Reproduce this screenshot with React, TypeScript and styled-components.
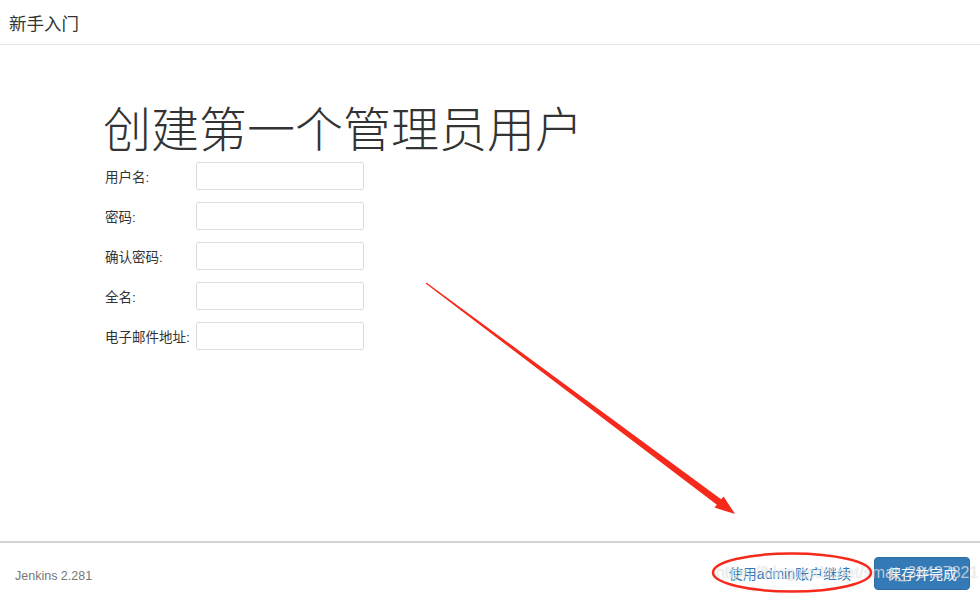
import styled, { createGlobalStyle } from "styled-components";

const GlobalStyle = createGlobalStyle`
  html, body {
    margin: 0;
    padding: 0;
    background: #fff;
  }
  body {
    font-family: "Liberation Sans", "Noto Sans CJK SC", sans-serif;
    color: #333;
  }
  * {
    box-sizing: border-box;
  }
`;

const Page = styled.div`
  position: relative;
  display: flex;
  flex-direction: column;
  height: 100vh;
  overflow: hidden;
`;

const Header = styled.header`
  height: 45px;
  padding: 0 9px;
  display: flex;
  align-items: center;
  border-bottom: 1px solid #e5e5e5;
  font-size: 17.5px;
  color: #333;
`;

const Main = styled.main`
  flex: 1;
  padding: 52px 0 0 103px;
`;

const Title = styled.h1`
  margin: 0 0 7px;
  font-size: 48px;
  font-weight: 300;
  line-height: 58px;
  color: #333;
  font-family: "Noto Sans CJK SC", sans-serif;
`;

const Form = styled.div`
  display: flex;
  flex-direction: column;
  gap: 12px;
`;

const Row = styled.div`
  display: flex;
  align-items: center;
`;

const Label = styled.label`
  width: 93px;
  padding-left: 2px;
  font-size: 13.5px;
  color: #333;
`;

const Input = styled.input`
  width: 168px;
  height: 28px;
  border: 1px solid #dcdcdc;
  border-radius: 2px;
  padding: 4px 6px;
  outline: none;
`;

const Footer = styled.footer`
  height: 55px;
  border-top: 2px solid #d4d4d4;
  display: flex;
  align-items: center;
  justify-content: space-between;
  padding: 0 10px 0 15px;
`;

const Version = styled.span`
  font-size: 12.5px;
  color: #777;
  padding-top: 12px;
`;

const Actions = styled.div`
  display: flex;
  align-items: center;
  gap: 10px;
  padding-top: 7px;
`;

const Button = styled.button<{ $primary?: boolean }>`
  height: 33px;
  padding: 0 12px;
  font-size: 14px;
  font-family: "Liberation Sans", "Noto Sans CJK SC", sans-serif;
  border-radius: 4px;
  border: 1px solid ${(p) => (p.$primary ? "#2e6da4" : "transparent")};
  background: ${(p) => (p.$primary ? "#337ab7" : "transparent")};
  color: ${(p) => (p.$primary ? "#fff" : "#337ab7")};
  cursor: pointer;
`;

const Watermark = styled.div`
  position: absolute;
  left: 716px;
  top: 564px;
  font-size: 16px;
  color: rgba(255, 255, 255, 0.6);
  text-shadow: 0 0 1px rgba(120, 120, 120, 0.35);
  white-space: nowrap;
  pointer-events: none;
`;

const Annotation = styled.svg`
  position: absolute;
  left: 0;
  top: 0;
  pointer-events: none;
`;

const fields = ["用户名:", "密码:", "确认密码:", "全名:", "电子邮件地址:"];

const App = () => {
  return (
    <Page>
      <GlobalStyle />
      <Header>新手入门</Header>
      <Main>
        <Title>创建第一个管理员用户</Title>
        <Form>
          {fields.map((f) => (
            <Row key={f}>
              <Label>{f}</Label>
              <Input type={f.includes("密码") ? "password" : "text"} />
            </Row>
          ))}
        </Form>
      </Main>
      <Footer>
        <Version>Jenkins 2.281</Version>
        <Actions>
          <Button>使用admin账户继续</Button>
          <Button $primary>保存并完成</Button>
        </Actions>
      </Footer>
      <Watermark>https://blog.csdn.net/smat_38437821</Watermark>
      <Annotation width="980" height="596" viewBox="0 0 980 596">
        <polygon
          fill="#f52a1c"
          points="426.4,282.4 721.1,499.3 723.6,496.4 735,514 714.4,507.6 716.9,504.7 425.6,283.6"
        />
        <ellipse cx="792" cy="572.5" rx="79" ry="19" fill="none" stroke="#f52a1c" strokeWidth="2.5" />
      </Annotation>
    </Page>
  );
};

export default App;
